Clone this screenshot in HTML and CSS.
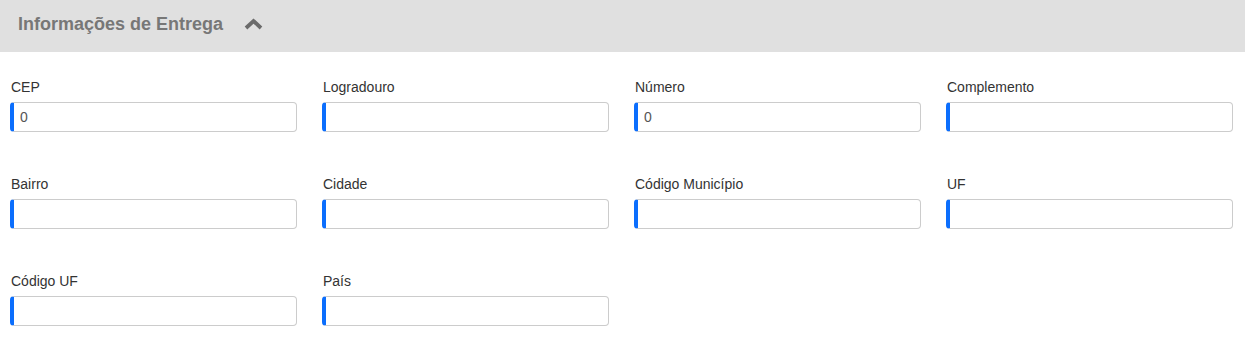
FILE: index.html
```html
<!DOCTYPE html>
<html lang="pt-BR">
<head>
    <meta charset="UTF-8">
    <meta name="viewport" content="width=device-width, initial-scale=1.0">
    <title>Informações de Entrega</title>
    <link rel="stylesheet" href="styles.css">
</head>
<body>
    <div class="section">
        <div class="section-header">
            <h2>Informações de Entrega</h2>
            <svg class="chevron" width="19" height="12" viewBox="0 0 19 12">
                <path d="M2 10 L9.5 3 L17 10" fill="none" stroke="#6b6b6b" stroke-width="3.8"/>
            </svg>
        </div>

        <form class="form-grid">
            <div class="form-group">
                <label for="cep">CEP</label>
                <input type="text" id="cep" value="0">
            </div>
            <div class="form-group">
                <label for="logradouro">Logradouro</label>
                <input type="text" id="logradouro">
            </div>
            <div class="form-group">
                <label for="numero">Número</label>
                <input type="text" id="numero" value="0">
            </div>
            <div class="form-group">
                <label for="complemento">Complemento</label>
                <input type="text" id="complemento">
            </div>

            <div class="form-group">
                <label for="bairro">Bairro</label>
                <input type="text" id="bairro">
            </div>
            <div class="form-group">
                <label for="cidade">Cidade</label>
                <input type="text" id="cidade">
            </div>
            <div class="form-group">
                <label for="cod_municipio">Código Município</label>
                <input type="text" id="cod_municipio">
            </div>
            <div class="form-group">
                <label for="uf">UF</label>
                <input type="text" id="uf">
            </div>

            <div class="form-group">
                <label for="cod_uf">Código UF</label>
                <input type="text" id="cod_uf">
            </div>
            <div class="form-group">
                <label for="pais">País</label>
                <input type="text" id="pais">
            </div>
        </form>
    </div>
</body>
</html>
```

FILE: styles.css
```css
* {
    margin: 0;
    padding: 0;
    box-sizing: border-box;
}

body {
    font-family: "Liberation Sans", Arial, sans-serif;
    background: white;
    color: #333;
}

.section-header {
    background: #e0e0e0;
    height: 52px;
    padding: 14px 18px 0;
    display: flex;
    align-items: flex-start;
}

.section-header h2 {
    font-size: 18px;
    font-weight: bold;
    color: #777;
    line-height: 21px;
}

.chevron {
    margin-left: 21px;
    margin-top: 4px;
}

.form-grid {
    display: grid;
    grid-template-columns: repeat(4, 287px);
    column-gap: 25px;
    row-gap: 45px;
    padding: 28px 12px 0 10px;
}

.form-group label {
    display: block;
    font-size: 14px;
    line-height: 14px;
    color: #333;
    margin-bottom: 8px;
    padding-left: 1px;
}

.form-group input {
    display: block;
    width: 100%;
    height: 30px;
    border: 1px solid #ccc;
    border-left: 4px solid #0b6efd;
    border-radius: 4px;
    padding: 0 6px;
    font-family: inherit;
    font-size: 14px;
    color: #555;
    background: white;
}

.form-group input:focus {
    outline: none;
    border-color: #0b6efd;
}
```
